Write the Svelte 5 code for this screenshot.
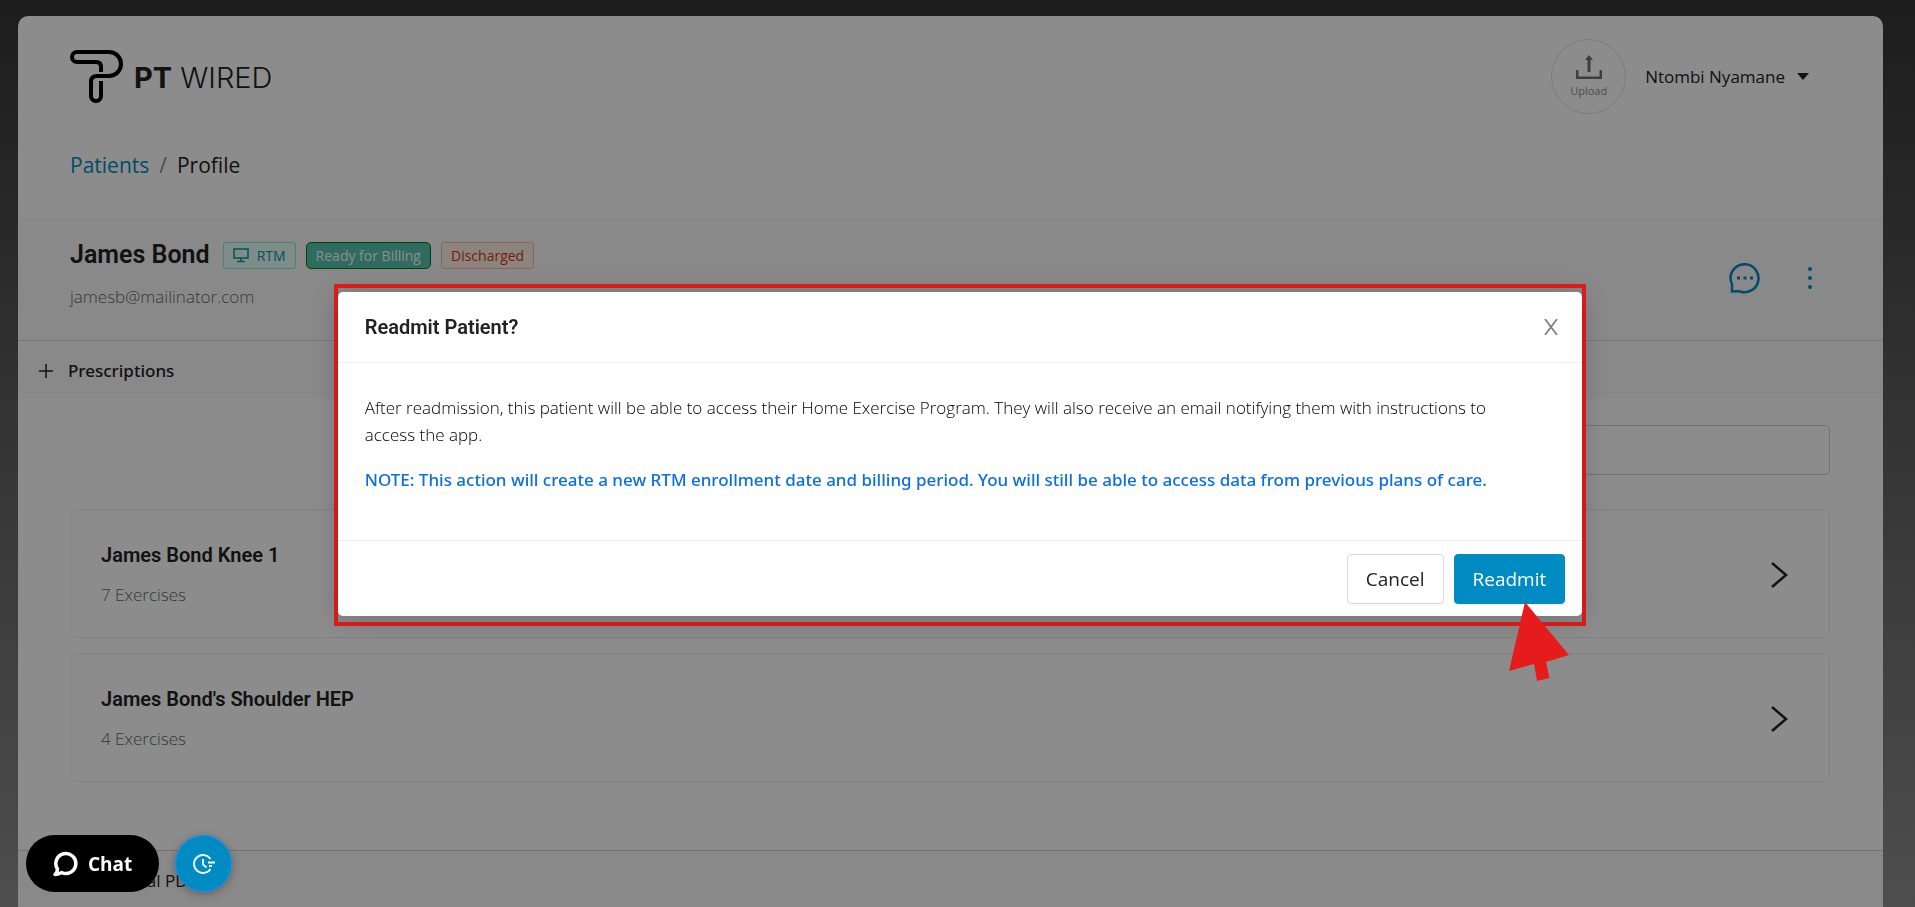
<script>
  const programs = [
    { name: 'James Bond Knee 1', exercises: 7 },
    { name: "James Bond's Shoulder HEP", exercises: 4 }
  ];

  let search = '';
  let showModal = true;

  /* hide the readmit dialog */
  function closeModal() {
    showModal = false;
  }
</script>

<div class="page">
  <main class="sheet">
    <header class="topbar">
      <a class="logo" href="/" aria-label="PT Wired home">
        <svg width="54" height="54" viewBox="0 0 54 54" fill="none" stroke="#000" stroke-width="4">
          <path d="M31 22V17Q31 12 26 12H7A5 5 0 0 1 7 2H39A12 12 0 0 1 39 26H27Q21 26 21 32V46A5 5 0 0 0 31 46V31" />
        </svg>
        <span class="logo-text"><b>PT</b> WIRED</span>
      </a>
      <div class="account">
        <button class="upload" type="button">
          <svg width="26" height="24" viewBox="0 0 26 24" fill="#727272">
            <path d="M13 0L17 5H14.500V17H11.500V5H9ZM0 15H2.500V21.500H23.500V15H26V24H0Z" />
          </svg>
          Upload
        </button>
        <button class="user" type="button">
          Ntombi Nyamane
          <svg width="12" height="7" viewBox="0 0 12 7" fill="#222"><path d="M0 0H12L6 7Z" /></svg>
        </button>
      </div>
    </header>

    <nav class="breadcrumb" aria-label="Breadcrumb">
      <a href="/patients">Patients</a>
      <span class="slash">/</span>
      <span>Profile</span>
    </nav>

    <section class="profile">
      <div>
        <div class="name-row">
          <h1>James Bond</h1>
          <span class="tag rtm">
            <svg width="16" height="16" viewBox="0 0 16 16" fill="none" stroke="currentColor" stroke-width="1.500">
              <path d="M1 2H15V11H1ZM8 11V14M4 14.500H12" />
            </svg>
            RTM
          </span>
          <span class="tag billing">Ready for Billing</span>
          <span class="tag discharged">Discharged</span>
        </div>
        <p class="email">jamesb@mailinator.com</p>
      </div>
      <div class="actions">
        <button type="button" aria-label="Messages">
          <svg width="32" height="32" viewBox="0 0 32 32" fill="none" stroke="#008bc2" stroke-width="2.500">
            <path d="M3 29.500V22Q1.500 19 1.500 16A14 14 0 1 1 11 29.500Q9 29 3 29.500Z" />
            <path d="M8 16h3M14.500 16h3M21 16h3" stroke-width="3" />
          </svg>
        </button>
        <button type="button" aria-label="More actions">
          <svg width="6" height="24" viewBox="0 0 6 24" fill="#008bc2">
            <circle cx="3" cy="3" r="2" /><circle cx="3" cy="12" r="2" /><circle cx="3" cy="21" r="2" />
          </svg>
        </button>
      </div>
    </section>

    <button class="panel-header" type="button">
      <svg width="14" height="14" viewBox="0 0 14 14" stroke="#222" stroke-width="1.500"><path d="M7 0V14M0 7H14" /></svg>
      Prescriptions
    </button>

    <section class="programs">
      <input class="search" type="text" aria-label="Search programs" bind:value={search} />
      {#each programs as program}
        <a class="program" href="/programs">
          <div>
            <h2>{program.name}</h2>
            <p>{program.exercises} Exercises</p>
          </div>
          <svg width="18" height="28" viewBox="0 0 18 28" fill="none" stroke="#222" stroke-width="2.500">
            <path d="M1 2L15 14L1 26" />
          </svg>
        </a>
      {/each}
    </section>

    <section class="pdfs">Educational PDFs</section>
  </main>
</div>

{#if showModal}
  <div class="mask">
    <div class="frame">
      <div class="modal" role="dialog" aria-modal="true" aria-labelledby="modal-title">
        <div class="modal-header">
          <h3 id="modal-title">Readmit Patient?</h3>
          <button class="close" type="button" aria-label="Close" on:click={closeModal}>
            <svg width="14" height="16" viewBox="0 0 14 16" stroke="#808080" stroke-width="1.800">
              <path d="M1 0L13 16M13 0L1 16" />
            </svg>
          </button>
        </div>
        <div class="modal-body">
          <p>
            After readmission, this patient will be able to access their Home Exercise Program. They will also
            receive an email notifying them with instructions to access the app.
          </p>
          <p class="note">
            NOTE: This action will create a new RTM enrollment date and billing period. You will still be able to
            access data from previous plans of care.
          </p>
        </div>
        <div class="modal-footer">
          <button class="btn" type="button" on:click={closeModal}>Cancel</button>
          <button class="btn primary" type="button" on:click={closeModal}>Readmit</button>
        </div>
      </div>
      <svg class="pointer" width="62" height="80" viewBox="0 0 62 80" fill="#e61c1c">
        <path d="M17 0L61 53L38 60L41.500 76L29 79L26 62L1 69Z" />
      </svg>
    </div>
  </div>
{/if}

<div class="floating">
  <button class="chat" type="button">
    <svg width="25" height="26" viewBox="0 0 25 26" fill="none" stroke="#fff" stroke-width="3.500" stroke-linejoin="round">
      <path d="M4.500 18A10 10 0 1 1 8.500 21.500Q6 23.500 2 23.500Q4.500 21.500 4.500 18Z" />
    </svg>
    Chat
  </button>
  <button class="timer" type="button" aria-label="Activity timer">
    <svg width="22" height="20" viewBox="0 0 22 20" fill="none" stroke="#fff" stroke-width="1.800">
      <path d="M17.500 5A9 9 0 1 0 17.500 15M10 5V10.500L13.500 13.500" />
      <path d="M15 8.500H22M16 12H19" />
    </svg>
  </button>
</div>

<style>
  :global(body) {
    overflow: hidden;
  }

  .page,
  .mask,
  .floating {
    font-family: 'Open Sans', 'Noto Sans', sans-serif;
    font-size: 17px;
    color: #222;
  }

  button {
    font: inherit;
    color: inherit;
    background: none;
    border: none;
    padding: 0;
    cursor: pointer;
  }

  a {
    color: inherit;
    text-decoration: none;
  }

  h1,
  h2,
  h3,
  p {
    margin: 0;
  }

  h1,
  h2,
  h3 {
    font-family: Roboto, sans-serif;
    font-weight: 600;
  }

  .page {
    display: flex;
    box-sizing: border-box;
    height: 100vh;
    padding: 16px 32px 0 18px;
    background: linear-gradient(#353535, #8e8e8e);
    overflow: hidden;
  }

  .sheet {
    display: flex;
    flex-direction: column;
    flex: 1;
    background: #fff;
    border-radius: 10px 10px 0 0;
  }

  .topbar {
    display: flex;
    align-items: center;
    justify-content: space-between;
    padding: 23px 74px 0 52px;
  }

  .logo,
  .account,
  .user {
    display: flex;
    align-items: center;
  }

  .logo {
    gap: 10px;
  }

  .logo-text {
    padding-top: 2px;
    font-family: Inter, sans-serif;
    font-size: 29px;
    font-weight: 300;
    line-height: 32px;
  }

  .logo-text b {
    font-weight: 700;
  }

  .account {
    gap: 19px;
  }

  .upload {
    display: flex;
    flex-direction: column;
    align-items: center;
    justify-content: center;
    gap: 4px;
    box-sizing: border-box;
    width: 75px;
    height: 75px;
    border: 1px solid #e0e0e0;
    border-radius: 50%;
    font-size: 11px;
    line-height: 16px;
    color: #8c8c8c;
  }

  .user {
    gap: 12px;
  }

  .breadcrumb {
    display: flex;
    gap: 10px;
    padding: 35px 52px 36px;
    font-size: 21px;
    line-height: 32px;
  }

  .breadcrumb a {
    color: #008bc2;
  }

  .slash {
    color: #8c8c8c;
  }

  .profile {
    display: flex;
    align-items: center;
    justify-content: space-between;
    padding: 22px 70px 27px 52px;
    background: #fafafa;
    border-bottom: 1px solid #d9d9d9;
  }

  .name-row {
    display: flex;
    align-items: center;
    gap: 10px;
  }

  h1 {
    margin-right: 3px;
    font-size: 25px;
    line-height: 32px;
  }

  .tag {
    display: flex;
    align-items: center;
    gap: 8px;
    padding: 0 9px;
    border: 1px solid;
    border-radius: 3px;
    font-size: 14px;
    line-height: 25px;
  }

  .rtm {
    color: #08979c;
    background: #e6fffb;
    border-color: #87e8de;
  }

  .billing {
    color: #fff;
    background: #57c3ae;
    border-color: green;
    border-radius: 5px;
  }

  .discharged {
    color: #d4380d;
    background: #fff2e8;
    border-color: #ffbb96;
  }

  .email,
  .program p {
    font-weight: 300;
    line-height: 27px;
    color: #666;
  }

  .email {
    margin: 12px 0 3px;
  }

  .actions {
    display: flex;
    align-items: center;
    gap: 46px;
    padding-top: 4px;
  }

  .actions button,
  .close {
    display: flex;
  }

  .panel-header {
    display: flex;
    align-items: center;
    gap: 15px;
    padding: 16px 21px 14px;
    background: #fafafa;
    font-family: 'Noto Sans', sans-serif;
    font-weight: 500;
    line-height: 27px;
  }

  .programs {
    display: flex;
    flex-direction: column;
    padding: 27px 53px 68px 52px;
  }

  .search {
    align-self: flex-end;
    box-sizing: border-box;
    width: 40%;
    height: 50px;
    margin-bottom: 34px;
    border: 1px solid #d0d0d0;
    border-radius: 5px;
    background: #fff;
  }

  .program {
    display: flex;
    align-items: center;
    justify-content: space-between;
    padding: 31px 40px 29px 30px;
    border: 1px solid #ececec;
    border-radius: 8px;
  }

  .program + .program {
    margin-top: 15px;
  }

  h2,
  h3 {
    font-size: 20px;
    line-height: 28px;
  }

  .program p {
    margin-top: 12px;
  }

  .pdfs {
    flex: 1;
    padding: 15px 50px;
    background: #fafafa;
    border-top: 1px solid #d0d0d0;
    line-height: 30px;
  }

  .mask {
    position: fixed;
    inset: 0;
    display: flex;
    align-items: flex-start;
    justify-content: center;
    padding: 284px 0 0 5px;
    background: rgb(0 0 0 / 45%);
  }

  .frame {
    position: relative;
    box-sizing: border-box;
    width: calc(65% + 11px);
    padding: 4px 0 6px;
    border: 4px solid #e61c1c;
  }

  .modal {
    background: #fff;
    border-radius: 5px;
    box-shadow: 0 4px 32px rgb(0 0 0 / 20%);
  }

  .modal-header {
    display: flex;
    align-items: center;
    justify-content: space-between;
    padding: 21px 24px 21px 27px;
    border-bottom: 1px solid #ececec;
  }

  .modal-body {
    padding: 31px 54px 47px 27px;
    font-weight: 300;
    line-height: 27px;
    color: #000;
  }

  .note {
    margin-top: 18px;
    font-family: 'Noto Sans', sans-serif;
    font-weight: 500;
    color: #0a6fe0;
  }

  .modal-footer {
    display: flex;
    justify-content: flex-end;
    gap: 10px;
    padding: 13px 17px 12px;
    border-top: 1px solid #ececec;
  }

  .btn {
    box-sizing: border-box;
    height: 50px;
    padding: 0 18px;
    border: 1px solid #d9d9d9;
    border-radius: 4px;
    background: #fff;
    font-size: 19px;
    box-shadow: 0 2px 0 rgb(0 0 0 / 2%);
  }

  .primary {
    color: #fff;
    background: #008bc2;
    border-color: #008bc2;
  }

  /* red arrow over the confirm button */
  .pointer {
    position: absolute;
    right: 12px;
    top: 314px;
  }

  .floating {
    position: fixed;
    left: 26px;
    bottom: 15px;
    display: flex;
    gap: 16px;
  }

  .chat {
    display: flex;
    align-items: center;
    gap: 10px;
    height: 57px;
    padding: 0 27px;
    border-radius: 29px;
    background: #000;
    color: #fff;
    font-size: 19px;
    font-weight: 700;
  }

  .timer {
    display: flex;
    align-items: center;
    justify-content: center;
    width: 57px;
    height: 57px;
    border: 1px solid #1890ff;
    border-radius: 50%;
    background: #008bc2;
    box-shadow: 0 2px 8px rgb(0 0 0 / 30%);
  }
</style>
